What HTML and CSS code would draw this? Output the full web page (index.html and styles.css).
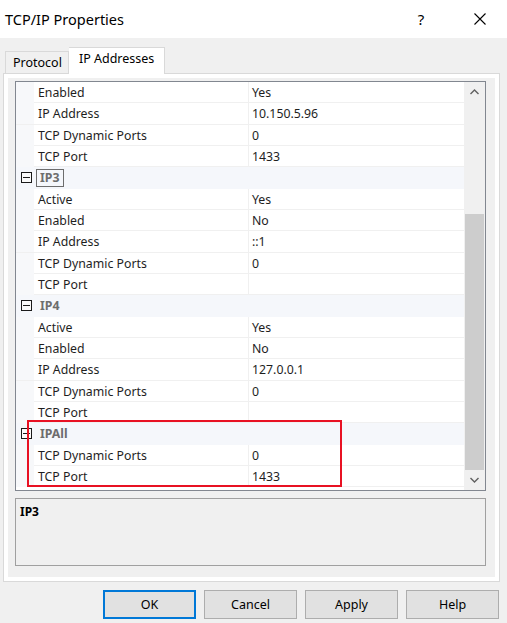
FILE: index.html
```html
<!DOCTYPE html>
<html>
<head>
<meta charset="utf-8">
<link rel="stylesheet" href="styles.css">
</head>
<body>
<div class="titlebar">
  <div class="title">TCP/IP Properties</div>
  <div class="tb-buttons">
    <span class="tb-help">?</span>
    <span class="tb-close"><svg width="12" height="12" viewBox="0 0 12 12"><path d="M0.5 0.5 L11.5 11.5 M11.5 0.5 L0.5 11.5" stroke="#000" stroke-width="1.1" fill="none"/></svg></span>
  </div>
</div>
<div class="tabs">
  <div class="tab">Protocol</div>
  <div class="tab active">IP Addresses</div>
</div>
<div class="panel">
  <div class="page">
    <div class="grid">
      <div class="rows">
        <div class="row"><div class="gut"></div><div class="name">Enabled</div><div class="val">Yes</div></div>
        <div class="row"><div class="gut"></div><div class="name">IP Address</div><div class="val">10.150.5.96</div></div>
        <div class="row"><div class="gut"></div><div class="name">TCP Dynamic Ports</div><div class="val">0</div></div>
        <div class="row"><div class="gut"></div><div class="name">TCP Port</div><div class="val">1433</div></div>
        <div class="row cat"><div class="gut"><span class="minus"></span></div><div class="cname"><span class="focus">IP3</span></div></div>
        <div class="row"><div class="gut"></div><div class="name">Active</div><div class="val">Yes</div></div>
        <div class="row"><div class="gut"></div><div class="name">Enabled</div><div class="val">No</div></div>
        <div class="row"><div class="gut"></div><div class="name">IP Address</div><div class="val">::1</div></div>
        <div class="row"><div class="gut"></div><div class="name">TCP Dynamic Ports</div><div class="val">0</div></div>
        <div class="row"><div class="gut"></div><div class="name">TCP Port</div><div class="val"></div></div>
        <div class="row cat"><div class="gut"><span class="minus"></span></div><div class="cname"><span class="plain">IP4</span></div></div>
        <div class="row"><div class="gut"></div><div class="name">Active</div><div class="val">Yes</div></div>
        <div class="row"><div class="gut"></div><div class="name">Enabled</div><div class="val">No</div></div>
        <div class="row"><div class="gut"></div><div class="name">IP Address</div><div class="val">127.0.0.1</div></div>
        <div class="row"><div class="gut"></div><div class="name">TCP Dynamic Ports</div><div class="val">0</div></div>
        <div class="row"><div class="gut"></div><div class="name">TCP Port</div><div class="val"></div></div>
        <div class="row cat"><div class="gut"><span class="minus"></span></div><div class="cname"><span class="plain">IPAll</span></div></div>
        <div class="row"><div class="gut"></div><div class="name">TCP Dynamic Ports</div><div class="val">0</div></div>
        <div class="row"><div class="gut"></div><div class="name">TCP Port</div><div class="val">1433</div></div>
        <div class="highlight"></div>
      </div>
      <div class="scrollbar">
        <div class="arrow"><svg width="9" height="6" viewBox="0 0 9 6"><path d="M0.5 5 L4.5 1 L8.5 5" stroke="#606060" stroke-width="1.4" fill="none"/></svg></div>
        <div class="track"><div class="thumb"></div></div>
        <div class="arrow"><svg width="9" height="6" viewBox="0 0 9 6"><path d="M0.5 1 L4.5 5 L8.5 1" stroke="#606060" stroke-width="1.4" fill="none"/></svg></div>
      </div>
    </div>
    <div class="desc"><b>IP3</b></div>
  </div>
</div>
<div class="buttons">
  <button class="btn default">OK</button>
  <button class="btn">Cancel</button>
  <button class="btn">Apply</button>
  <button class="btn">Help</button>
</div>
</body>
</html>
```
FILE: styles.css
```css
* { box-sizing: border-box; }
html, body { margin: 0; padding: 0; }
body {
  width: 507px;
  height: 623px;
  background: #f0f0f0;
  font-family: "Noto Sans", "Open Sans", sans-serif;
  font-size: 12px;
  color: #000;
  overflow: hidden;
}
.titlebar {
  height: 38px;
  background: #fff;
  display: flex;
  align-items: center;
  justify-content: space-between;
}
.title {
  padding-left: 5px;
  font-size: 14.5px;
  padding-bottom: 1px;
}
.tb-buttons {
  display: flex;
  align-items: center;
}
.tb-help {
  width: 46px;
  text-align: center;
  font-size: 15px;
  margin-right: 13px;
}
.tb-close {
  width: 46px;
  display: flex;
  justify-content: center;
  margin-right: 4px;
}
.tabs {
  display: flex;
  align-items: flex-end;
  padding-left: 5px;
  margin-top: 9px;
  height: 26px;
}
.tab {
  height: 22px;
  padding: 0 6px 0 7px;
  border: 1px solid #d9d9d9;
  border-bottom: none;
  background: #f0f0f0;
  line-height: 21px;
  font-size: 12.5px;
}
.tab.active {
  background: #fff;
  border-left: none;
  padding: 0 10px 0 10px;
  line-height: 22px;
  position: relative;
  z-index: 1;
  margin-bottom: -1px;
  height: 27px;
}
.panel {
  margin-left: 3px;
  width: 497px;
  height: 509px;
  background: #fff;
  border: 1px solid #d9d9d9;
  padding: 4px;
}
.page {
  background: #f0f0f0;
  height: 499px;
  padding: 3px 9px 0 7px;
}
.grid {
  height: 410px;
  border: 1px solid #828790;
  background: #fff;
  display: flex;
}
.rows {
  flex: 1;
  position: relative;
}
.row {
  display: grid;
  grid-template-columns: 18px 214px 1fr;
  height: 21.33px;
  border-bottom: 1px solid #f0f0f0;
  align-items: center;
  color: #1e1e1e;
  font-size: 12.3px;
}
.row .gut {
  height: 100%;
  background: #f7f8fa;
  display: flex;
  align-items: center;
  justify-content: center;
}
.row .name {
  padding-left: 4px;
  padding-top: 1px;
  height: 100%;
  line-height: 20px;
  white-space: nowrap;
}
.row .val {
  padding-left: 3px;
  padding-top: 1px;
  height: 100%;
  line-height: 20px;
  border-left: 1px solid #f0f0f0;
}
.row.cat {
  background: #f5f7fb;
  border-bottom-color: #f5f7fb;
  grid-template-columns: 18px 1fr;
}
.row.cat .gut { background: #f5f7fb; }
.minus {
  width: 11px;
  height: 11px;
  border: 1px solid #1a1a1a;
  position: relative;
  background: #fafafa;
  display: block;
  margin-left: 2px;
  margin-top: 1px;
}
.minus::after {
  content: "";
  position: absolute;
  left: 1px;
  right: 1px;
  top: 4px;
  height: 1px;
  background: #1a1a1a;
}
.cname {
  font-weight: bold;
  color: #6d6d6d;
  padding-left: 2px;
  padding-top: 1px;
  display: flex;
  align-items: center;
}
.cname .focus {
  border: 1px solid #6d6d6d;
  padding: 0 4px 0 3px;
  line-height: 16px;
}
.cname .plain {
  padding-left: 4px;
}
.highlight {
  position: absolute;
  left: 11px;
  top: 338px;
  width: 315px;
  height: 67px;
  border: 2px solid #e81123;
}
.scrollbar {
  width: 21px;
  background: #f0f0f0;
  display: flex;
  flex-direction: column;
}
.arrow {
  height: 20px;
  display: flex;
  align-items: center;
  justify-content: center;
}
.track {
  flex: 1;
  display: flex;
  flex-direction: column;
  justify-content: flex-end;
}
.thumb {
  height: 256px;
  margin: 0 1px;
  background: #cdcdcd;
}
.desc {
  margin-top: 7px;
  height: 68px;
  border: 1px solid #a0a0a0;
  padding: 4px 0 0 4px;
  font-size: 12px;
}
.buttons {
  display: flex;
  justify-content: flex-end;
  gap: 8px;
  padding-right: 8px;
  margin-top: 8px;
}
.btn {
  width: 93px;
  height: 29px;
  background: #e1e1e1;
  border: 1px solid #adadad;
  font-family: "Noto Sans", "Open Sans", sans-serif;
  font-size: 12.5px;
  color: #000;
  padding: 0;
}
.btn.default {
  border: 2px solid #0078d7;
}
```
